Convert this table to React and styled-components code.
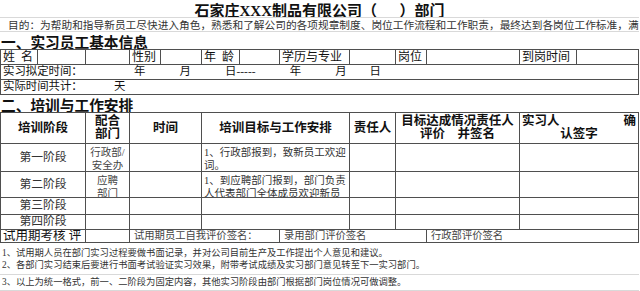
import React from 'react'
import styled, { createGlobalStyle } from 'styled-components'

const COLS = [38, 48, 44, 31, 41, 38, 40, 70, 46, 31, 93, 57, 62]
const ROWS = [18, 14, 18, 15, 15, 15, 18, 31, 28, 26, 17, 15, 13, 32, 16]

const LINE = '#4f4f4f'
const GRID = '#d9d9d9'

const GlobalStyle = createGlobalStyle`
  html, body {
    margin: 0;
    background: #fff;
  }
  body {
    font-family: "Liberation Serif", "Noto Sans CJK SC", serif;
    color: #111;
  }
`

const Sheet = styled.div`
  display: grid;
  grid-template-columns: ${COLS.map(c => c + 'px').join(' ')};
  grid-template-rows: ${ROWS.map(r => r + 'px').join(' ')};
  width: 639px;
  height: 291px;
  overflow: hidden;
`

const Band = styled.div`
  grid-column: 1 / -1;
  box-sizing: border-box;
  border-bottom: 1px solid ${p => (p.$dark ? LINE : GRID)};
  white-space: nowrap;
  overflow: hidden;
  display: flex;
  align-items: center;
`

const Title = styled(Band)`
  justify-content: center;
  white-space: pre;
  font-size: 15px;
  font-weight: 700;
  padding-top: 2px;
`

const Purpose = styled(Band)`
  font-size: 10.7px;
  color: #333;
  padding-left: 8px;
`

const SectionHead = styled(Band)`
  font-size: 14.7px;
  font-weight: 700;
  padding-left: 1px;
  padding-top: 1px;
`

const Cell = styled.div`
  grid-column: span ${p => p.$span || 1};
  box-sizing: border-box;
  border-right: 1px solid ${LINE};
  border-bottom: 1px solid ${LINE};
  ${p => p.$first && `border-left: 1px solid ${LINE};`}
  overflow: hidden;
  white-space: nowrap;
  display: flex;
  align-items: center;
  justify-content: ${p => (p.$center ? 'center' : 'flex-start')};
  padding: 0 2px;
  font-size: 12px;
  line-height: 1;
`

const Label = styled(Cell)`
  white-space: pre;
`

const FieldLine = styled(Cell)`
  white-space: pre;
  font-size: 11.4px;
`

const HeadCell = styled(Cell)`
  flex-direction: column;
  justify-content: center;
  align-items: center;
  text-align: center;
  font-size: 12.5px;
  font-weight: 700;
  line-height: 13px;
`

const SplitLine = styled.div`
  display: flex;
  justify-content: space-between;
  align-self: stretch;
`

const Stage = styled(Cell)`
  justify-content: center;
  font-size: 11.8px;
  color: #333;
`

const Dept = styled(Cell)`
  flex-direction: column;
  justify-content: flex-start;
  align-items: center;
  padding-top: 2px;
  font-size: 10.5px;
  line-height: 13px;
  color: #444;
`

const Goal = styled(Cell)`
  align-items: flex-start;
  white-space: normal;
  font-size: 10.5px;
  line-height: 13px;
  padding: 2px 2px 0;
  color: #333;
`

const Sign = styled(Cell)`
  font-size: 10.3px;
  color: #444;
  padding-left: 4px;
`

const EvalLabel = styled(Cell)`
  font-size: 12.5px;
  white-space: pre;
`

const Note = styled(Band)`
  flex-direction: column;
  align-items: flex-start;
  justify-content: ${p => (p.$top ? 'flex-start' : 'center')};
  padding: ${p => (p.$top ? '5px 2px 0' : '0 2px')};
  font-size: 9.3px;
  line-height: 11.5px;
  color: #333;
`

const stages = [
  {
    name: '第一阶段',
    dept: ['行政部/', '安全办'],
    goal: '1、行政部报到，致新员工欢迎词。',
  },
  {
    name: '第二阶段',
    dept: ['应聘', '部门'],
    goal: '1、到应聘部门报到，部门负责人代表部门全体成员欢迎新员',
  },
]

const StageRow = ({ name, dept, goal }) => (
  <>
    <Stage $span={2} $first>{name}</Stage>
    <Dept>
      {dept.map(d => (
        <span key={d}>{d}</span>
      ))}
    </Dept>
    <Cell $span={2} />
    <Goal $span={3}>{goal}</Goal>
    <Cell />
    <Cell $span={2} />
    <Cell $span={2} />
  </>
)

const EmptyStage = ({ name }) => (
  <>
    <Stage $span={2} $first>{name}</Stage>
    <Cell />
    <Cell $span={2} />
    <Cell $span={3} />
    <Cell />
    <Cell $span={2} />
    <Cell $span={2} />
  </>
)

export default function App() {
  return (
    <>
      <GlobalStyle />
      <Sheet>
        <Title>{'石家庄XXX制品有限公司（      ）部门'}</Title>
        <Purpose>
          目的：为帮助和指导新员工尽快进入角色，熟悉和了解公司的各项规章制度、岗位工作流程和工作职责，最终达到各岗位工作标准，满
        </Purpose>
        <SectionHead $dark>一、实习员工基本信息</SectionHead>

        <Label $first>{'姓  名'}</Label>
        <Cell />
        <Cell />
        <Label>性别</Label>
        <Cell />
        <Label>{'年  龄'}</Label>
        <Cell />
        <Label>学历与专业</Label>
        <Cell />
        <Label>岗位</Label>
        <Cell />
        <Label>到岗时间</Label>
        <Cell />

        <FieldLine $span={13} $first>
          {'实习拟定时间：　　　　　年　　　月　　　日-----　　　年　　　月　　日'}
        </FieldLine>
        <FieldLine $span={13} $first>
          {'实际时间共计：　　　 天'}
        </FieldLine>

        <SectionHead $dark>二、培训与工作安排</SectionHead>

        <HeadCell $span={2} $first>培训阶段</HeadCell>
        <HeadCell>
          <span>配合</span>
          <span>部门</span>
        </HeadCell>
        <HeadCell $span={2}>时间</HeadCell>
        <HeadCell $span={3}>培训目标与工作安排</HeadCell>
        <HeadCell>责任人</HeadCell>
        <HeadCell $span={2}>
          <span>目标达成情况责任人</span>
          <span>评价　并签名</span>
        </HeadCell>
        <HeadCell $span={2}>
          <SplitLine>
            <span>实习人</span>
            <span>确</span>
          </SplitLine>
          <span>认签字</span>
        </HeadCell>

        {stages.map(s => (
          <StageRow key={s.name} {...s} />
        ))}
        <EmptyStage name="第三阶段" />
        <EmptyStage name="第四阶段" />

        <EvalLabel $span={2} $first>{'试用期考核 评'}</EvalLabel>
        <Cell />
        <Sign $span={4}>试用期员工自我评价签名：</Sign>
        <Sign $span={3}>录用部门评价签名</Sign>
        <Sign $span={3}>行政部评价签名</Sign>

        <Note $top>
          <span>1、试用期人员在部门实习过程要做书面记录，并对公司目前生产及工作提出个人意见和建议。</span>
          <span>2、各部门实习结束后要进行书面考试验证实习效果，附带考试成绩及实习部门意见转至下一实习部门。</span>
        </Note>
        <Note>
          <span>3、以上为统一格式，前一、二阶段为固定内容，其他实习阶段由部门根据部门岗位情况可做调整。</span>
        </Note>
      </Sheet>
    </>
  )
}
